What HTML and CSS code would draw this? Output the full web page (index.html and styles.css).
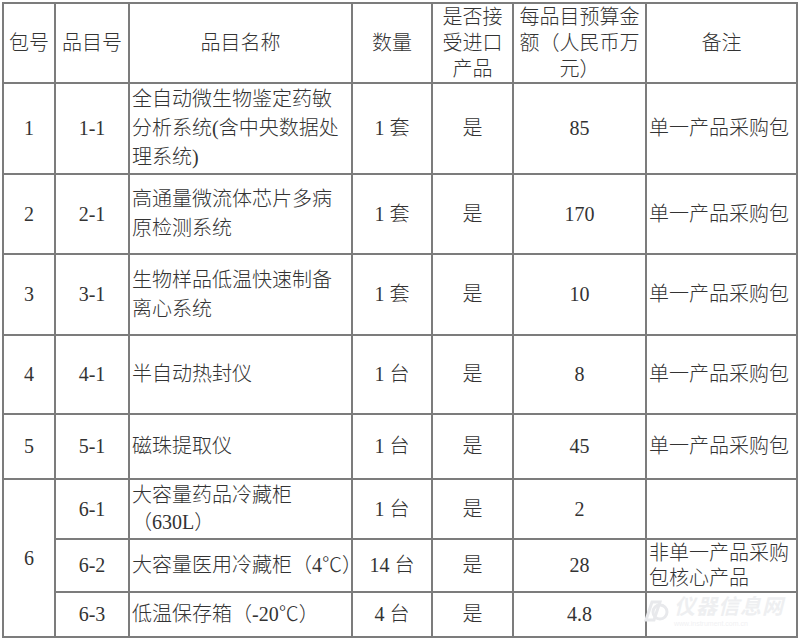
FILE: index.html
```html
<!DOCTYPE html>
<html lang="zh">
<head>
<meta charset="utf-8">
<link rel="stylesheet" href="styles.css">
</head>
<body>
<div class="page">
<table class="grid">
  <colgroup>
    <col class="c1"><col class="c2"><col class="c3"><col class="c4"><col class="c5"><col class="c6"><col class="c7">
  </colgroup>
  <tr class="h-head">
    <th>包号</th>
    <th>品目号</th>
    <th>品目名称</th>
    <th>数量</th>
    <th class="wrap">是否接受进口产品</th>
    <th class="wrap">每品目预算金额（人民币万元）</th>
    <th>备注</th>
  </tr>
  <tr class="h-r1">
    <td>1</td><td>1-1</td>
    <td class="name">全自动微生物鉴定药敏分析系统(含中央数据处理系统)</td>
    <td>1 套</td><td>是</td><td>85</td>
    <td class="note">单一产品采购包</td>
  </tr>
  <tr class="h-r2">
    <td>2</td><td>2-1</td>
    <td class="name">高通量微流体芯片多病原检测系统</td>
    <td>1 套</td><td>是</td><td>170</td>
    <td class="note">单一产品采购包</td>
  </tr>
  <tr class="h-r3">
    <td>3</td><td>3-1</td>
    <td class="name">生物样品低温快速制备离心系统</td>
    <td>1 套</td><td>是</td><td>10</td>
    <td class="note">单一产品采购包</td>
  </tr>
  <tr class="h-r4">
    <td>4</td><td>4-1</td>
    <td class="name">半自动热封仪</td>
    <td>1 台</td><td>是</td><td>8</td>
    <td class="note">单一产品采购包</td>
  </tr>
  <tr class="h-r5">
    <td>5</td><td>5-1</td>
    <td class="name">磁珠提取仪</td>
    <td>1 台</td><td>是</td><td>45</td>
    <td class="note">单一产品采购包</td>
  </tr>
  <tr class="h-r6">
    <td rowspan="3">6</td><td>6-1</td>
    <td class="name tight">大容量药品冷藏柜（630L）</td>
    <td>1 台</td><td>是</td><td>2</td>
    <td class="note"></td>
  </tr>
  <tr class="h-r7">
    <td>6-2</td>
    <td class="name nowrap">大容量医用冷藏柜（4℃）</td>
    <td>14 台</td><td>是</td><td>28</td>
    <td class="note tighter">非单一产品采购包核心产品</td>
  </tr>
  <tr class="h-r8">
    <td>6-3</td>
    <td class="name">低温保存箱（-20℃）</td>
    <td>4 台</td><td>是</td><td>4.8</td>
    <td class="note"></td>
  </tr>
</table>
<div class="watermark">
  <svg class="wm-icon" width="30" height="30" viewBox="0 0 30 30">
    <path d="M6 24 L12 6 L20 6 L14 24 Z" fill="none" stroke="#e8e9ec" stroke-width="3"/>
    <circle cx="20" cy="16" r="7" fill="none" stroke="#e8e9ec" stroke-width="3"/>
  </svg>
  <div class="wm-text">
    <span class="wm-main">仪器信息网</span>
    <span class="wm-sub">www.instrument.com.cn</span>
  </div>
</div>
</div>
</body>
</html>
```

FILE: styles.css
```css
html, body {
  margin: 0;
  padding: 0;
  background: #ffffff;
}

.page {
  position: relative;
  width: 800px;
  height: 640px;
  padding: 2px;
  box-sizing: border-box;
}

.grid {
  width: 796px;
  table-layout: fixed;
  border-collapse: collapse;
  font-family: "Liberation Serif", "Noto Sans CJK SC", serif;
  font-size: 20px;
  font-weight: 300;
  color: #333333;
  line-height: 29px;
}

.c1 { width: 52px; }
.c2 { width: 74px; }
.c3 { width: 223px; }
.c4 { width: 80px; }
.c5 { width: 81px; }
.c6 { width: 133px; }
.c7 { width: 151px; }

.grid th,
.grid td {
  border: 2px solid #7c7c7c;
  padding: 0;
  text-align: center;
  vertical-align: middle;
  font-weight: 300;
}

.grid th {
  line-height: 26px;
}

.grid th.wrap {
  padding: 0 4px;
}

.grid td.name {
  text-align: left;
  padding-left: 2px;
  padding-right: 10px;
}

.grid td.note {
  text-align: left;
  padding-left: 2px;
  padding-right: 0;
}

.grid td.nowrap {
  white-space: nowrap;
  padding-right: 0;
}

.grid td.tight {
  line-height: 27px;
}

.grid td.tighter {
  line-height: 25px;
}

.h-head { height: 79px; }
.h-r1 { height: 91px; }
.h-r2 { height: 80px; }
.h-r3 { height: 81px; }
.h-r4 { height: 79px; }
.h-r5 { height: 65px; }
.h-r6 { height: 60px; }
.h-r7 { height: 53px; }
.h-r8 { height: 45px; }

.watermark {
  position: absolute;
  left: 640px;
  top: 594px;
  display: flex;
  align-items: center;
  gap: 4px;
  pointer-events: none;
}

.wm-text {
  display: flex;
  flex-direction: column;
  line-height: 1.1;
}

.wm-main {
  font-family: "Noto Sans CJK SC", sans-serif;
  font-weight: 700;
  font-style: italic;
  font-size: 21px;
  color: #eeeff1;
  letter-spacing: 1px;
}

.wm-sub {
  font-family: "Liberation Sans", sans-serif;
  font-size: 7px;
  color: #f1f1f3;
  margin-top: 3px;
}
```
